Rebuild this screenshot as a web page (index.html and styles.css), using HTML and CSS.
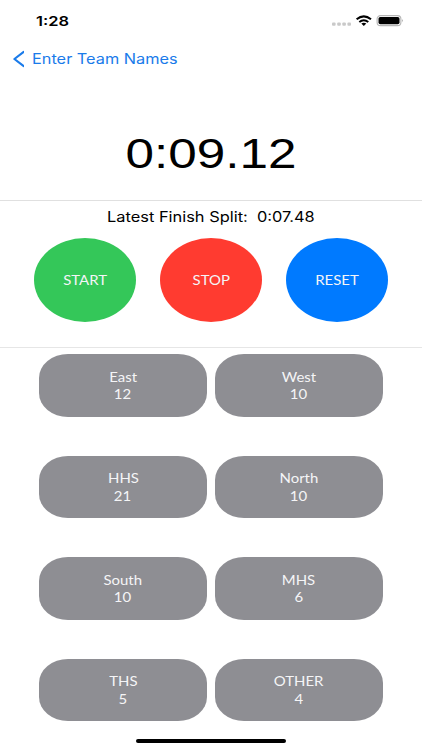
FILE: index.html
```html
<!DOCTYPE html>
<html lang="en">
<head>
<meta charset="utf-8">
<title>Race Timer</title>
<link rel="stylesheet" href="styles.css">
</head>
<body>
<div class="screen">
  <header class="status">
    <span class="clock wide">1:28</span>
    <svg class="status-icons" width="74" height="14" viewBox="0 0 74 14">
      <g fill="#c9c9c9"><rect x="1" y="8.5" width="3.6" height="3.2" rx="1"/><rect x="6.2" y="8.5" width="3.6" height="3.2" rx="1"/><rect x="11.3" y="8.5" width="3.6" height="3.2" rx="1"/><rect x="16.4" y="8.5" width="3.6" height="3.2" rx="1"/></g>
      <g fill="none" stroke="#000" stroke-width="2"><path d="M25.6 5.2Q32.8-.5 40 5.2"/><path d="M28.3 8Q32.8 4.5 37.3 8"/></g>
      <path d="M30.3 9.6Q32.8 8 35.3 9.6L32.8 12Z"/>
      <rect x="46.1" y="1.6" width="23.8" height="10" rx="3.4" fill="#fff" stroke="#b5b5b5" stroke-width="1.1"/>
      <rect x="47.5" y="3" width="21" height="7.2" rx="1.8"/>
      <path d="M71 5Q72.6 6.6 71 8.2Z" fill="#999"/>
    </svg>
  </header>
  <nav class="nav">
    <svg width="12" height="18" viewBox="0 0 12 18"><path d="M11.4 2L2.4 9L11.4 16" fill="none" stroke="#1a7bea" stroke-width="2.2" stroke-linecap="round" stroke-linejoin="round"/></svg>
    <a class="back wide">Enter Team Names</a>
  </nav>
  <section class="timer"><span class="time wide">0:09.12</span></section>
  <section class="controls">
    <div class="split"><span class="split-text wide">Latest Finish Split:&nbsp; 0:07.48</span></div>
    <div class="buttons">
      <button class="round start"><span class="wide">START</span></button>
      <button class="round stop"><span class="wide">STOP</span></button>
      <button class="round reset"><span class="wide">RESET</span></button>
    </div>
  </section>
  <main class="teams">
    <button class="team"><span class="wide">East</span><span class="wide">12</span></button>
    <button class="team"><span class="wide">West</span><span class="wide">10</span></button>
    <button class="team"><span class="wide">HHS</span><span class="wide">21</span></button>
    <button class="team"><span class="wide">North</span><span class="wide">10</span></button>
    <button class="team"><span class="wide">South</span><span class="wide">10</span></button>
    <button class="team"><span class="wide">MHS</span><span class="wide">6</span></button>
    <button class="team"><span class="wide">THS</span><span class="wide">5</span></button>
    <button class="team"><span class="wide">OTHER</span><span class="wide">4</span></button>
  </main>
  <div class="home"></div>
</div>
</body>
</html>
```
FILE: styles.css
```css
* { box-sizing: border-box; }
body { margin: 0; background: #fff; color: #000; font-family: Inter, "Liberation Sans", sans-serif; }
.screen { width: 422px; height: 750px; display: flex; flex-direction: column; overflow: hidden; }
.wide { display: inline-block; white-space: pre; transform: scaleX(1.22); }
.status { height: 42px; padding: 14px 17px 0 36px; display: flex; justify-content: space-between; align-items: flex-start; }
.clock { font-size: 13.5px; line-height: 14px; font-weight: 600; transform-origin: left; }
.status-icons { display: block; }
.nav { height: 34px; padding-left: 12px; display: flex; align-items: center; gap: 8px; color: #1a7bea; }
.back { font-size: 14px; line-height: 18px; transform: scaleX(1.165); transform-origin: left; }
.timer { height: 125px; padding-top: 54px; display: flex; justify-content: center; border-bottom: 1px solid #e0e0e0; }
.time { font-family: "Liberation Sans", sans-serif; font-size: 42px; line-height: 48px; }
.controls { height: 147px; border-bottom: 1px solid #e6e6e6; }
.split { height: 37px; padding-top: 5px; text-align: center; }
.split-text { font-size: 14.2px; line-height: 18px; transform: scaleX(1.155); }
.buttons { display: flex; justify-content: center; gap: 24px; }
button { border: 0; padding: 0; color: #f5f5f7; font-family: Lato, sans-serif; font-size: 13px; }
button .wide { transform: scaleX(1.15); }
.round { width: 102.3px; height: 84px; border-radius: 50%; }
.start { background: #34c759; }
.stop { background: #ff3b30; }
.reset { background: #007aff; }
.teams { height: 389px; padding: 6px 39px 0; display: grid; grid-template-columns: 168px 168px; grid-auto-rows: 62.5px; column-gap: 8px; row-gap: 39px; align-content: start; }
.team { display: flex; flex-direction: column; align-items: center; justify-content: center; padding-top: 2px; background: #8e8e93; border-radius: 29px / 24px; line-height: 17.4px; }
.home { width: 150px; height: 4px; margin: 2px auto 0; border-radius: 2px; background: #000; }
```
